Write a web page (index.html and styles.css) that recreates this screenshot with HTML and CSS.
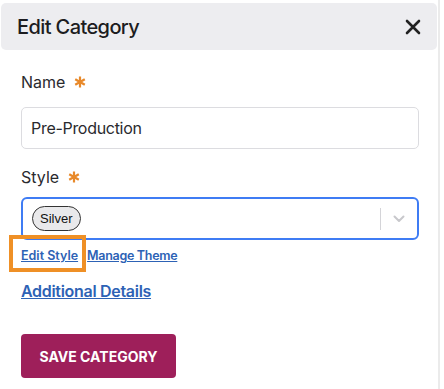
FILE: index.html
```html
<!DOCTYPE html>
<html lang="en">
<head>
  <meta charset="UTF-8">
  <meta name="viewport" content="width=device-width, initial-scale=1.0">
  <title>Edit Category</title>
  <link rel="stylesheet" href="styles.css">
</head>
<body>
  <div class="panel">
    <div class="panel-header">
      <h2 class="panel-title">Edit Category</h2>
      <button class="close-btn" aria-label="Close">
        <svg width="16" height="16" viewBox="0 0 16 16">
          <path d="M2 2 L14 14 M14 2 L2 14" stroke="#222" stroke-width="2.6" stroke-linecap="round"/>
        </svg>
      </button>
    </div>

    <form class="panel-body">
      <div class="form-group">
        <label for="name">Name
          <svg class="required" width="12" height="12" viewBox="0 0 12 12">
            <path d="M6 0.5 V11.5 M1.2 3.2 L10.8 8.8 M10.8 3.2 L1.2 8.8" stroke="#e8892a" stroke-width="2.2"/>
          </svg>
        </label>
        <input type="text" id="name" name="name" value="Pre-Production">
      </div>

      <div class="form-group">
        <label>Style
          <svg class="required" width="12" height="12" viewBox="0 0 12 12">
            <path d="M6 0.5 V11.5 M1.2 3.2 L10.8 8.8 M10.8 3.2 L1.2 8.8" stroke="#e8892a" stroke-width="2.2"/>
          </svg>
        </label>
        <div class="select">
          <div class="select-value">
            <span class="pill">Silver</span>
          </div>
          <div class="select-indicator">
            <svg width="12" height="8" viewBox="0 0 12 8">
              <path d="M1.5 1.5 L6 6 L10.5 1.5" fill="none" stroke="#c8c8cc" stroke-width="2" stroke-linecap="round" stroke-linejoin="round"/>
            </svg>
          </div>
        </div>
        <div class="style-links">
          <a href="#" class="small-link highlighted">Edit Style</a>
          <a href="#" class="small-link">Manage Theme</a>
        </div>
      </div>

      <a href="#" class="details-link">Additional Details</a>

      <button type="submit" class="btn">Save Category</button>
    </form>
  </div>
</body>
</html>
```

FILE: styles.css
```css
body {
  font-family: Inter, "Noto Sans", sans-serif;
  margin: 0;
  padding: 0;
  background-color: white;
  color: #222;
}
.panel {
  width: 440px;
  min-height: 100vh;
  border-right: 2px solid #ebebeb;
  box-sizing: border-box;
  padding: 3px 1px 0;
}
.panel-header {
  display: flex;
  justify-content: space-between;
  align-items: center;
  height: 47px;
  padding: 0 16px;
  background-color: #ededf0;
  border-radius: 5px;
}
.panel-title {
  margin: 0;
  font-size: 20px;
  font-weight: 500;
  color: #1c1c20;
  letter-spacing: -0.6px;
}
.close-btn {
  background: none;
  border: none;
  padding: 0;
  display: flex;
  cursor: pointer;
}
.panel-body {
  padding: 22px 18px 0 20px;
}
.form-group {
  margin-bottom: 12px;
}
.form-group label {
  display: flex;
  align-items: center;
  gap: 9px;
  font-size: 16px;
  color: #2a2a2e;
  margin-bottom: 15px;
}
.form-group input {
  width: 100%;
  height: 42px;
  padding: 0 9px;
  border: 1px solid #dcdce0;
  border-radius: 5px;
  font-family: inherit;
  font-size: 16px;
  color: #2a2a2e;
  letter-spacing: -0.3px;
  box-sizing: border-box;
  margin-bottom: 6px;
}
.select {
  display: flex;
  align-items: center;
  height: 43px;
  margin-top: -5px;
  border: 2px solid #3f7cf4;
  border-radius: 6px;
  box-sizing: border-box;
}
.select-value {
  flex: 1;
  padding-left: 9px;
}
.pill {
  display: inline-block;
  padding: 4px 7px;
  font-family: "Liberation Sans", Arial, sans-serif;
  font-size: 13px;
  color: #111;
  background-color: #e9e9eb;
  border: 1px solid #333;
  border-radius: 13px;
}
.select-indicator {
  display: flex;
  align-items: center;
  justify-content: center;
  width: 36px;
  height: 22px;
  border-left: 1px solid #d4d4d8;
}
.style-links {
  display: flex;
  gap: 9px;
  margin-top: 8px;
}
.small-link {
  font-size: 12.5px;
  font-weight: 600;
  color: #2d62b5;
  text-decoration: underline;
}
.small-link + .small-link {
  letter-spacing: -0.3px;
}
.highlighted {
  position: relative;
}
.highlighted::after {
  content: "";
  position: absolute;
  left: -12px;
  top: -13px;
  width: 77px;
  height: 37px;
  border: 4px solid #ef9026;
  box-sizing: border-box;
}
.details-link {
  display: inline-block;
  margin-top: 6px;
  font-size: 16px;
  font-weight: 600;
  color: #2d62b5;
  letter-spacing: -0.3px;
  text-decoration: underline;
}
.btn {
  display: block;
  margin-top: 33px;
  width: 155px;
  height: 44px;
  background-color: #9e1f5a;
  color: white;
  border: none;
  border-radius: 4px;
  font-family: inherit;
  font-size: 14px;
  font-weight: 700;
  text-transform: uppercase;
  cursor: pointer;
}
```
